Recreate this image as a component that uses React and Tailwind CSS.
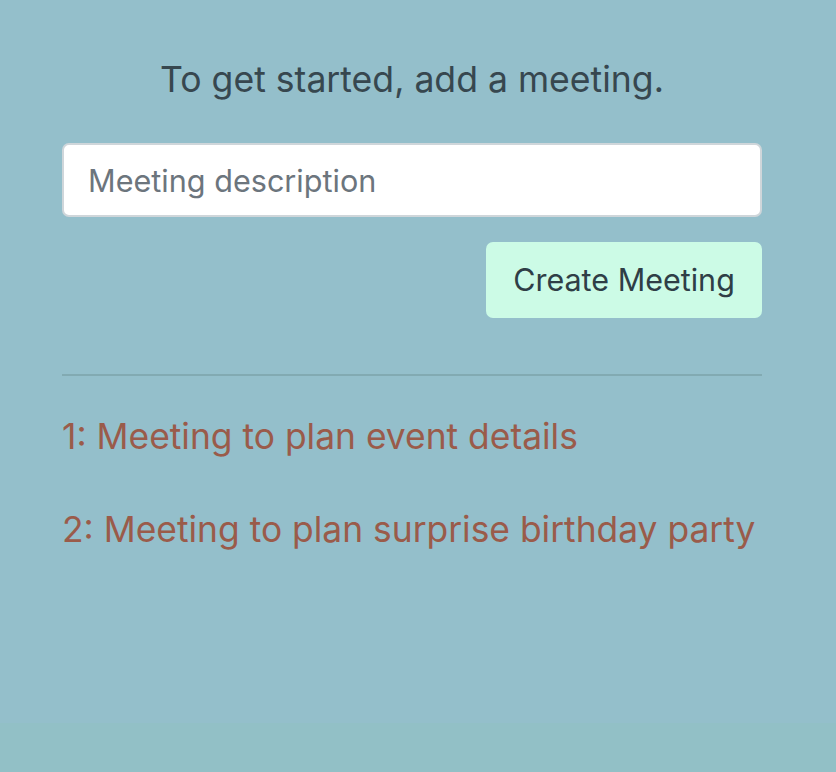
export default function App() {
  return (
    <div className="min-h-[772px] flex flex-col bg-[#94bfcb] font-['Inter',sans-serif]">
      <div className="flex-1">
        <div className="w-[700px] ml-[62px] pt-[55px]">
          <h2 className="text-center text-[35.6px] leading-[50px] text-[#37474f]">
            To get started, add a meeting.
          </h2>
          <input
            className="mt-[38px] w-full h-[74px] px-[24px] rounded-[7px] border-2 border-[#cfd6da] bg-white text-[30.6px] text-[#495057] placeholder:text-[#6c757d] outline-none"
            placeholder="Meeting description"
          />
          <div className="flex justify-end mt-[25px]">
            <button className="h-[76px] w-[276px] rounded-[7px] bg-[#ccfbe6] text-[30.5px] text-[#2f3e46]">
              Create Meeting
            </button>
          </div>
          <hr className="mt-[56px] border-t-2 border-[#82aab2]" />
          <ul className="mt-[37px] flex flex-col gap-[45px]">
            <li className="text-[35.4px] leading-[48px] text-[#9a5b4a]">1: Meeting to plan event details</li>
            <li className="text-[35.4px] leading-[48px] text-[#9a5b4a]">2: Meeting to plan surprise birthday party</li>
          </ul>
        </div>
      </div>
      <div className="h-[49px] bg-[#92c0c6]" />
    </div>
  );
}
